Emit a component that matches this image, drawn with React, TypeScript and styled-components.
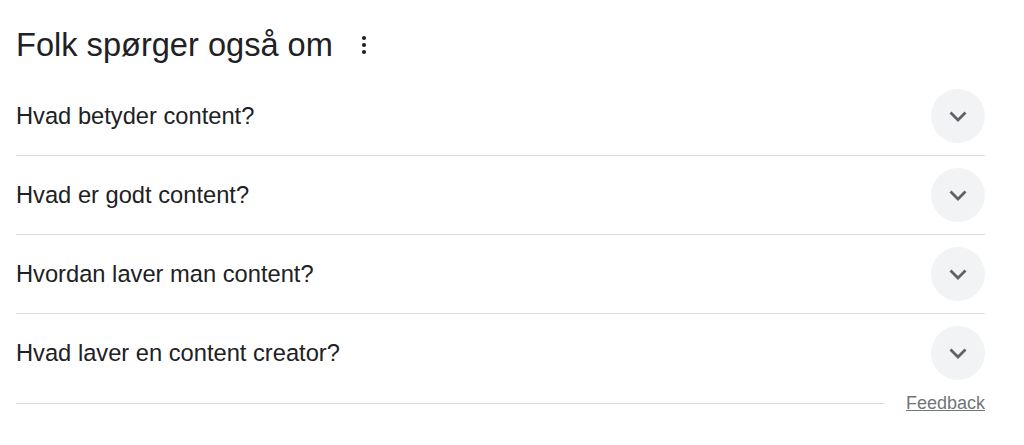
import React, { FC } from 'react'
import styled, { createGlobalStyle } from 'styled-components'

const GlobalStyle = createGlobalStyle`
  html, body {
    margin: 0;
    padding: 0;
    background: #fff;
    font-family: 'Liberation Sans', Arial, sans-serif;
    color: #202124;
  }
`

const SPage = styled.div`
  width: 969px;
  padding-left: 16px;
`

const SHeader = styled.div`
  display: flex;
  align-items: center;
  padding-top: 13px;
  box-sizing: border-box;
  height: 77px;
`

const STitle = styled.h2`
  margin: 0;
  font-size: 32.6px;
  font-weight: 400;
  line-height: 40px;
`

const SMenuButton = styled.div`
  display: flex;
  align-items: center;
  justify-content: center;
  width: 24px;
  height: 24px;
  margin-left: 19px;
  color: #202124;
`

const SRow = styled.div<{ last?: boolean }>`
  display: flex;
  align-items: center;
  justify-content: space-between;
  height: 78px;
  border-bottom: ${({ last }) => (last ? 'none' : '1px solid #dadce0')};
`

const SQuestion = styled.span`
  font-size: 23.7px;
  line-height: 32px;
`

const SExpand = styled.div`
  display: flex;
  align-items: center;
  justify-content: center;
  width: 54px;
  height: 54px;
  border-radius: 50%;
  background: #f1f3f4;
  color: #5f6368;
`

const SFooter = styled.div`
  display: flex;
  align-items: center;
  height: 22px;
  .line {
    flex: 1;
    border-top: 1px solid #dadce0;
    margin-right: 21px;
  }
  a {
    font-size: 18px;
    color: #70757a;
    text-decoration: underline;
  }
`

const KebabIcon: FC = () => (
  <svg width="6" height="20" viewBox="0 0 6 20">
    <circle cx="3" cy="3" r="2.1" fill="currentColor" />
    <circle cx="3" cy="10" r="2.1" fill="currentColor" />
    <circle cx="3" cy="17" r="2.1" fill="currentColor" />
  </svg>
)

const ChevronIcon: FC = () => (
  <svg width="20" height="14" viewBox="0 0 20 14">
    <path d="M2.5 3.5 L10 11 L17.5 3.5" fill="none" stroke="currentColor" strokeWidth="2.8" />
  </svg>
)

const questions = [
  'Hvad betyder content?',
  'Hvad er godt content?',
  'Hvordan laver man content?',
  'Hvad laver en content creator?',
]

const App: FC = () => (
  <>
    <GlobalStyle />
    <SPage>
      <SHeader>
        <STitle>Folk spørger også om</STitle>
        <SMenuButton>
          <KebabIcon />
        </SMenuButton>
      </SHeader>
      {questions.map((q, i) => (
        <SRow key={q} last={i === questions.length - 1}>
          <SQuestion>{q}</SQuestion>
          <SExpand>
            <ChevronIcon />
          </SExpand>
        </SRow>
      ))}
      <SFooter>
        <div className="line" />
        <a href="#">Feedback</a>
      </SFooter>
    </SPage>
  </>
)

export default App
